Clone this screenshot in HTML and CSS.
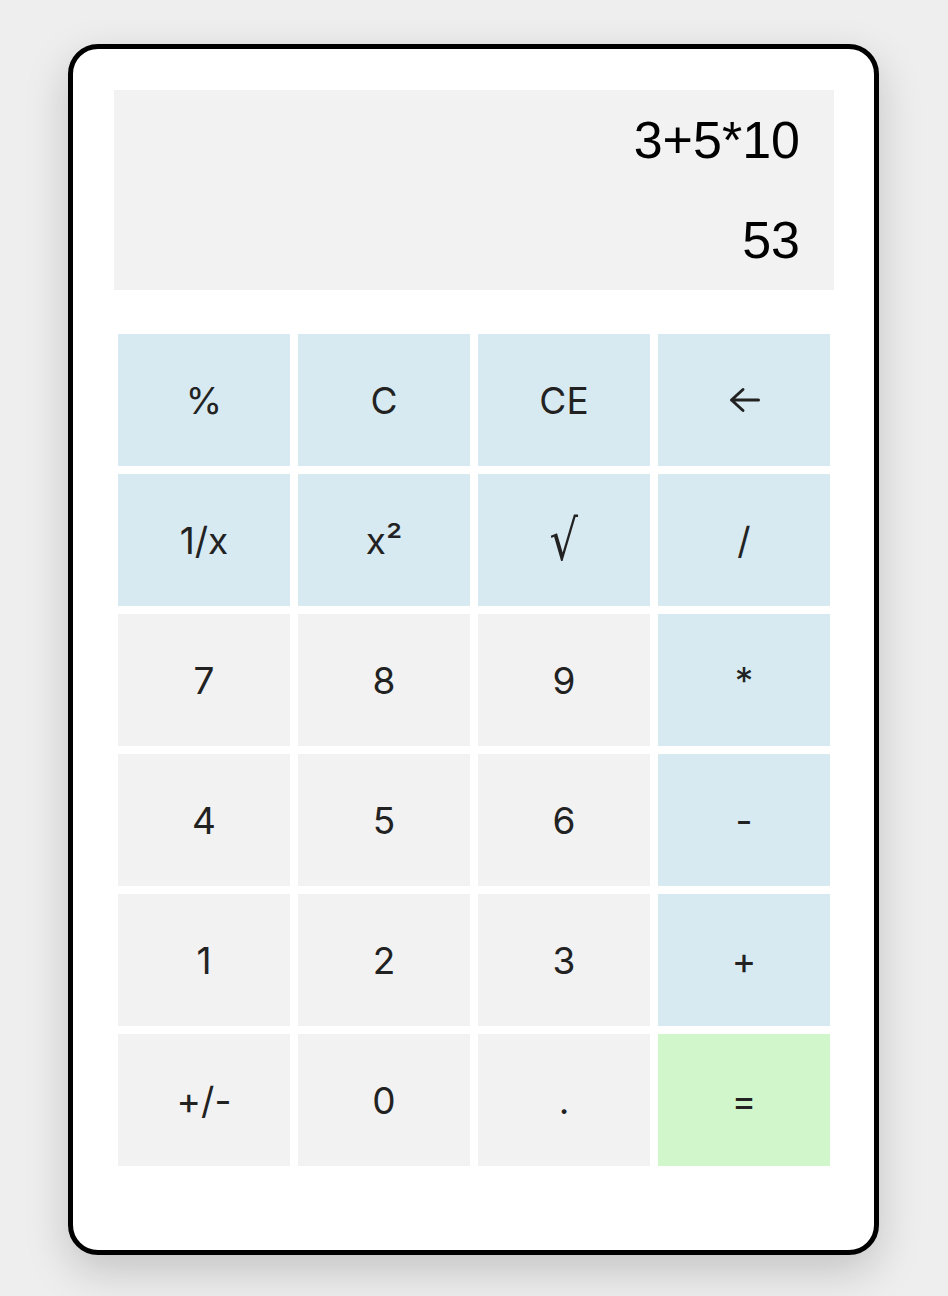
FILE: index.html
```html
<!DOCTYPE html>
<html lang="en">
<head>
<meta charset="utf-8">
<title>Calculator</title>
<link rel="stylesheet" href="styles.css">
</head>
<body>
<div class="calc">
  <div class="display">
    <div class="expr">3+5*10</div>
    <div class="result">53</div>
  </div>
  <div class="keys">
    <button class="key op">%</button>
    <button class="key op">C</button>
    <button class="key op">CE</button>
    <button class="key op" aria-label="backspace"><svg class="arrow" width="32" height="26" viewBox="0 0 32 26"><path d="M30.5 13H3.5M15 2.5L3.5 13L15 23.5" fill="none" stroke="#222" stroke-width="3" stroke-linecap="round" stroke-linejoin="round"/></svg></button>
    <button class="key op">1/x</button>
    <button class="key op">x²</button>
    <button class="key op root"><span class="root-glyph">√</span></button>
    <button class="key op">/</button>
    <button class="key">7</button>
    <button class="key">8</button>
    <button class="key">9</button>
    <button class="key op">*</button>
    <button class="key">4</button>
    <button class="key">5</button>
    <button class="key">6</button>
    <button class="key op">-</button>
    <button class="key">1</button>
    <button class="key">2</button>
    <button class="key">3</button>
    <button class="key op">+</button>
    <button class="key">+/-</button>
    <button class="key">0</button>
    <button class="key">.</button>
    <button class="key eq">=</button>
  </div>
</div>
</body>
</html>
```
FILE: styles.css
```css
* { box-sizing: border-box; }
html, body { margin: 0; padding: 0; }
body {
  background: #eeeeee;
  padding-top: 44px;
  min-height: 1296px;
  font-family: Inter, "Liberation Sans", sans-serif;
}
.calc {
  width: 811px;
  height: 1211px;
  margin: 0 0 0 68px;
  background: #ffffff;
  border: 5px solid #000000;
  border-radius: 30px;
  padding: 41px 40px 0 41px;
  box-shadow: 0 16px 44px rgba(0, 0, 0, 0.18);
}
.display {
  width: 720px;
  height: 200px;
  background: #f2f2f2;
  padding: 0 34px;
  text-align: right;
  font-family: "Liberation Sans", Arial, sans-serif;
  font-size: 52px;
  color: #000000;
}
.expr, .result {
  height: 100px;
  line-height: 100px;
}
.keys {
  margin: 44px 4px 0 4px;
  display: grid;
  grid-template-columns: repeat(4, 172px);
  grid-auto-rows: 132px;
  gap: 8px;
}
.key {
  border: none;
  margin: 0;
  padding: 0;
  background: #f2f2f2;
  color: #222222;
  font-family: Inter, "Liberation Sans", sans-serif;
  font-size: 37px;
  display: flex;
  align-items: center;
  justify-content: center;
}
.key.op { background: #d7e9f1; }
.key.eq { background: #d2f6cb; }
.root-glyph {
  font-family: "DejaVu Sans", sans-serif;
  font-size: 56px;
  line-height: 1;
  display: block;
  transform: scaleX(0.8);
  margin-top: 2px;
}
.arrow { display: block; }
```
